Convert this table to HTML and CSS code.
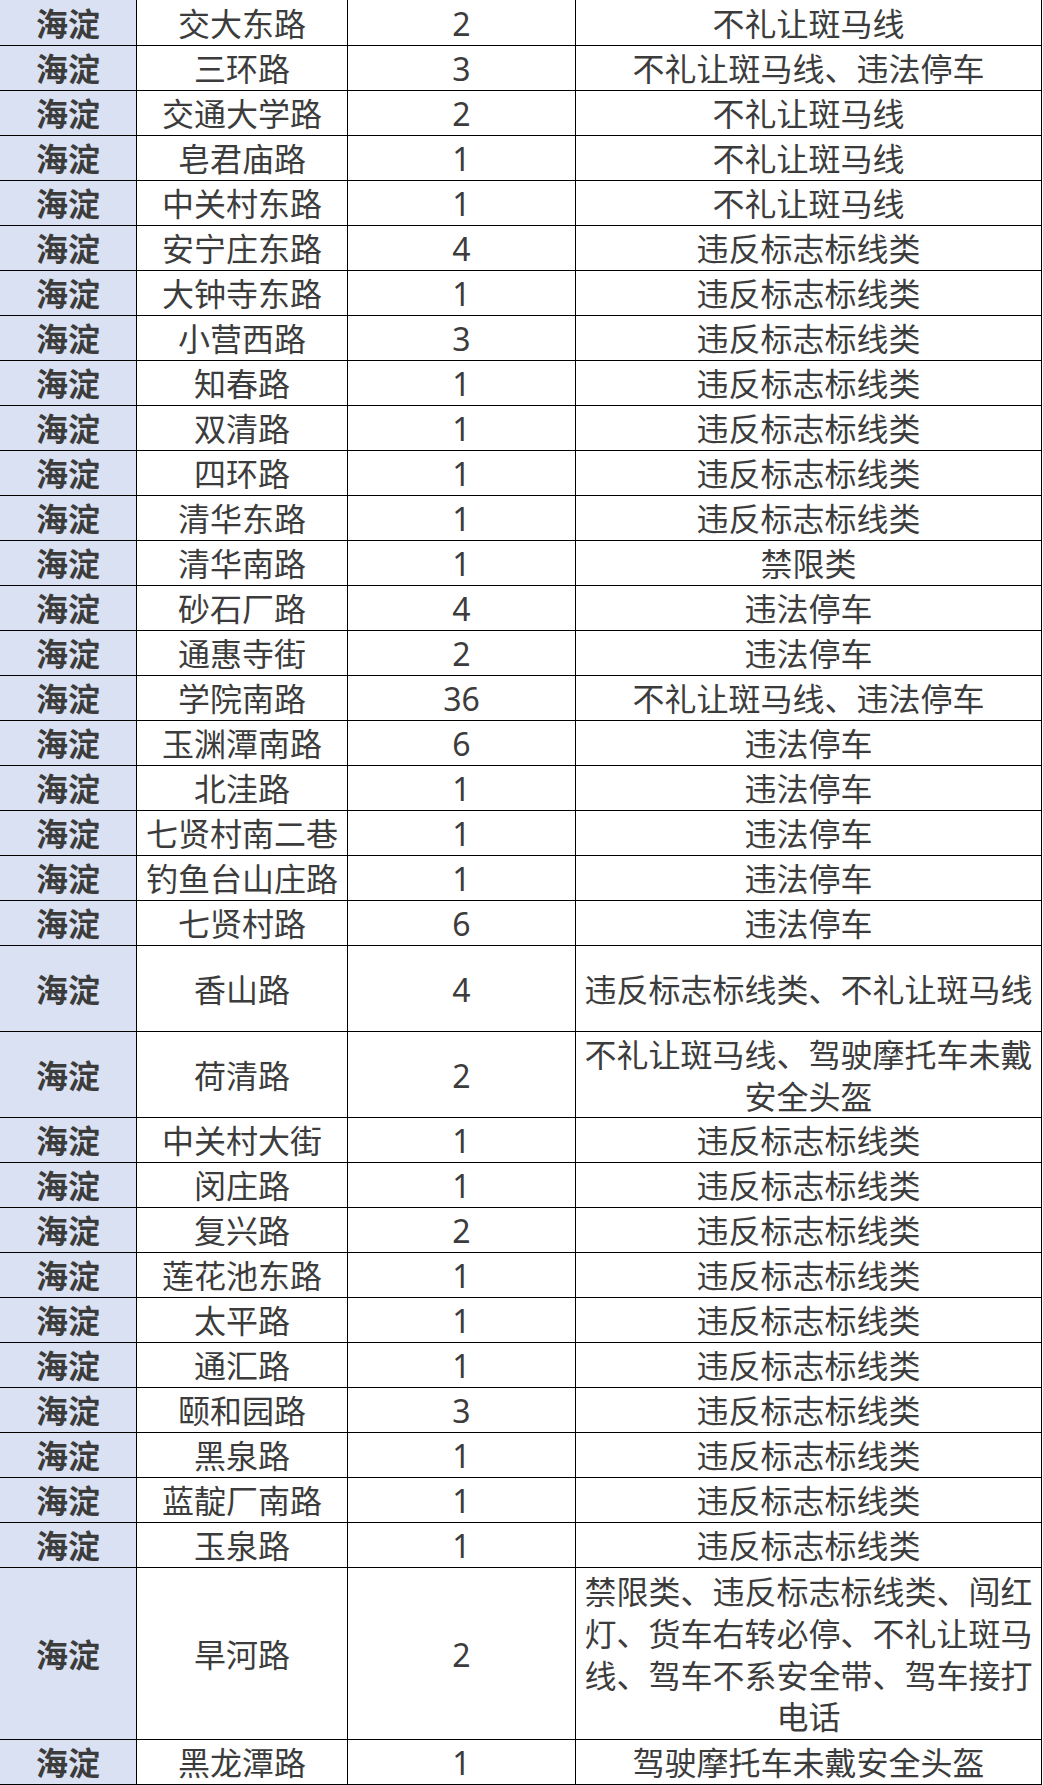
FILE: index.html
```html
<!DOCTYPE html>
<html lang="zh-CN">
<head>
<meta charset="utf-8">
<title>海淀</title>
<link rel="stylesheet" href="styles.css">
</head>
<body>
<div class="sheet">
  <div class="row first"><div class="c area">海淀</div><div class="c">交大东路</div><div class="c">2</div><div class="c">不礼让斑马线</div></div>
  <div class="row"><div class="c area">海淀</div><div class="c">三环路</div><div class="c">3</div><div class="c">不礼让斑马线、违法停车</div></div>
  <div class="row"><div class="c area">海淀</div><div class="c">交通大学路</div><div class="c">2</div><div class="c">不礼让斑马线</div></div>
  <div class="row"><div class="c area">海淀</div><div class="c">皂君庙路</div><div class="c">1</div><div class="c">不礼让斑马线</div></div>
  <div class="row"><div class="c area">海淀</div><div class="c">中关村东路</div><div class="c">1</div><div class="c">不礼让斑马线</div></div>
  <div class="row"><div class="c area">海淀</div><div class="c">安宁庄东路</div><div class="c">4</div><div class="c">违反标志标线类</div></div>
  <div class="row"><div class="c area">海淀</div><div class="c">大钟寺东路</div><div class="c">1</div><div class="c">违反标志标线类</div></div>
  <div class="row"><div class="c area">海淀</div><div class="c">小营西路</div><div class="c">3</div><div class="c">违反标志标线类</div></div>
  <div class="row"><div class="c area">海淀</div><div class="c">知春路</div><div class="c">1</div><div class="c">违反标志标线类</div></div>
  <div class="row"><div class="c area">海淀</div><div class="c">双清路</div><div class="c">1</div><div class="c">违反标志标线类</div></div>
  <div class="row"><div class="c area">海淀</div><div class="c">四环路</div><div class="c">1</div><div class="c">违反标志标线类</div></div>
  <div class="row"><div class="c area">海淀</div><div class="c">清华东路</div><div class="c">1</div><div class="c">违反标志标线类</div></div>
  <div class="row"><div class="c area">海淀</div><div class="c">清华南路</div><div class="c">1</div><div class="c">禁限类</div></div>
  <div class="row"><div class="c area">海淀</div><div class="c">砂石厂路</div><div class="c">4</div><div class="c">违法停车</div></div>
  <div class="row"><div class="c area">海淀</div><div class="c">通惠寺街</div><div class="c">2</div><div class="c">违法停车</div></div>
  <div class="row"><div class="c area">海淀</div><div class="c">学院南路</div><div class="c">36</div><div class="c">不礼让斑马线、违法停车</div></div>
  <div class="row"><div class="c area">海淀</div><div class="c">玉渊潭南路</div><div class="c">6</div><div class="c">违法停车</div></div>
  <div class="row"><div class="c area">海淀</div><div class="c">北洼路</div><div class="c">1</div><div class="c">违法停车</div></div>
  <div class="row"><div class="c area">海淀</div><div class="c">七贤村南二巷</div><div class="c">1</div><div class="c">违法停车</div></div>
  <div class="row"><div class="c area">海淀</div><div class="c">钓鱼台山庄路</div><div class="c">1</div><div class="c">违法停车</div></div>
  <div class="row"><div class="c area">海淀</div><div class="c">七贤村路</div><div class="c">6</div><div class="c">违法停车</div></div>
  <div class="row h2"><div class="c area">海淀</div><div class="c">香山路</div><div class="c">4</div><div class="c">违反标志标线类、不礼让斑马线</div></div>
  <div class="row h2"><div class="c area">海淀</div><div class="c">荷清路</div><div class="c">2</div><div class="c">不礼让斑马线、驾驶摩托车未戴安全头盔</div></div>
  <div class="row"><div class="c area">海淀</div><div class="c">中关村大街</div><div class="c">1</div><div class="c">违反标志标线类</div></div>
  <div class="row"><div class="c area">海淀</div><div class="c">闵庄路</div><div class="c">1</div><div class="c">违反标志标线类</div></div>
  <div class="row"><div class="c area">海淀</div><div class="c">复兴路</div><div class="c">2</div><div class="c">违反标志标线类</div></div>
  <div class="row"><div class="c area">海淀</div><div class="c">莲花池东路</div><div class="c">1</div><div class="c">违反标志标线类</div></div>
  <div class="row"><div class="c area">海淀</div><div class="c">太平路</div><div class="c">1</div><div class="c">违反标志标线类</div></div>
  <div class="row"><div class="c area">海淀</div><div class="c">通汇路</div><div class="c">1</div><div class="c">违反标志标线类</div></div>
  <div class="row"><div class="c area">海淀</div><div class="c">颐和园路</div><div class="c">3</div><div class="c">违反标志标线类</div></div>
  <div class="row"><div class="c area">海淀</div><div class="c">黑泉路</div><div class="c">1</div><div class="c">违反标志标线类</div></div>
  <div class="row"><div class="c area">海淀</div><div class="c">蓝靛厂南路</div><div class="c">1</div><div class="c">违反标志标线类</div></div>
  <div class="row"><div class="c area">海淀</div><div class="c">玉泉路</div><div class="c">1</div><div class="c">违反标志标线类</div></div>
  <div class="row h4"><div class="c area">海淀</div><div class="c">旱河路</div><div class="c">2</div><div class="c">禁限类、违反标志标线类、闯红灯、货车右转必停、不礼让斑马线、驾车不系安全带、驾车接打电话</div></div>
  <div class="row"><div class="c area">海淀</div><div class="c">黑龙潭路</div><div class="c">1</div><div class="c">驾驶摩托车未戴安全头盔</div></div>
</div>
</body>
</html>
```
FILE: styles.css
```css
html, body {
  margin: 0;
  padding: 0;
  background: #ffffff;
}

.sheet {
  width: 1042px;
  font-family: "Noto Sans", "Noto Sans CJK SC", sans-serif;
  font-size: 32px;
  line-height: 41.7px;
  color: #3c3c3c;
}

.row {
  display: grid;
  grid-template-columns: 137px 211px 228px 466px;
  height: 45px;
}

.row.first {
  height: 46px;
}

.row.h2 {
  height: 86px;
}

.row.h4 {
  height: 172px;
}

.c {
  box-sizing: border-box;
  border-right: 1px solid #000000;
  border-bottom: 1px solid #000000;
  display: flex;
  align-items: center;
  justify-content: center;
  text-align: center;
  padding: 2px 4px 0;
  overflow: hidden;
}

.area {
  background: #d9e1f2;
  font-weight: 700;
}
```
